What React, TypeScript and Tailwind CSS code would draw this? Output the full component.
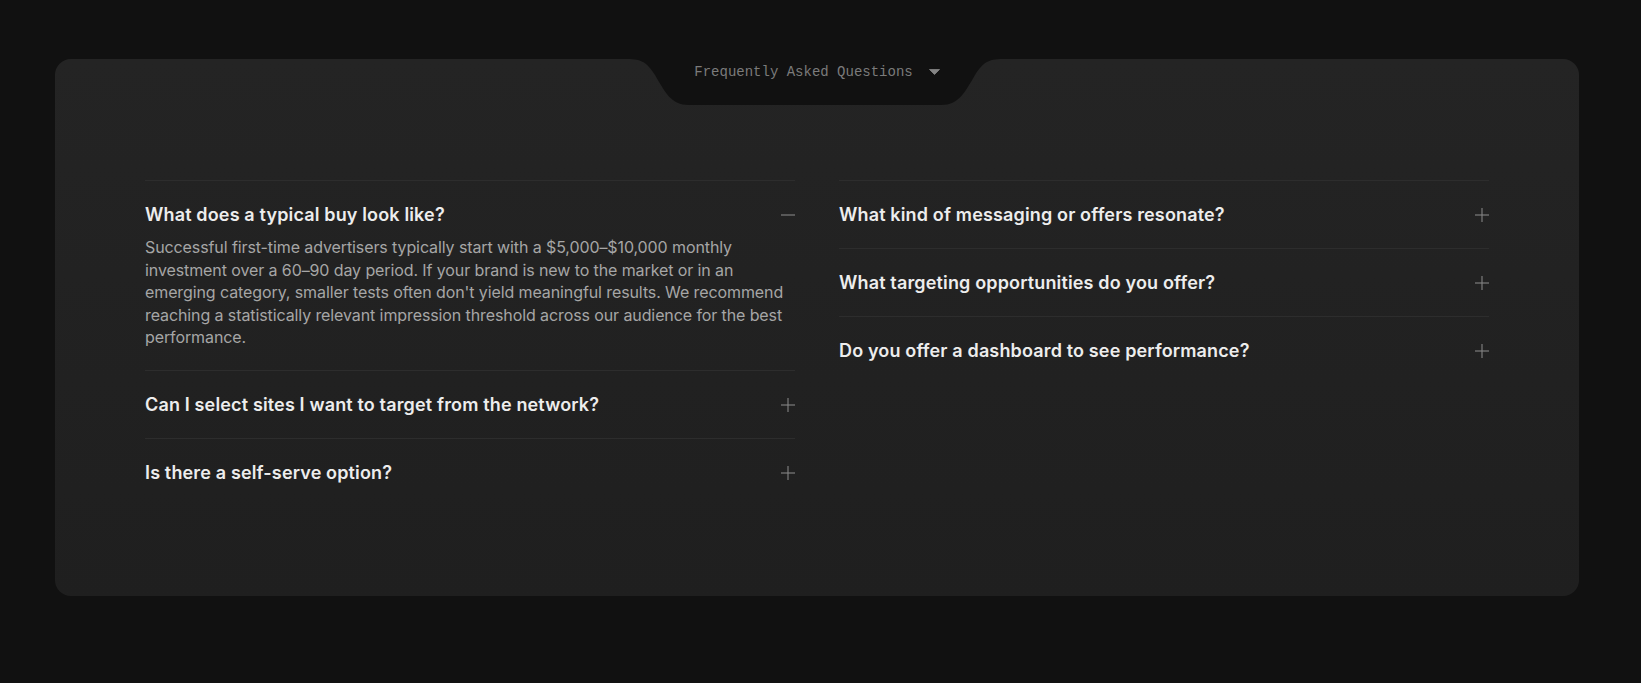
import { useState } from 'react';

type Faq = { id: string; q: string; a: string };

const left: Faq[] = [
  {
    id: 'buy',
    q: 'What does a typical buy look like?',
    a: "Successful first-time advertisers typically start with a $5,000–$10,000 monthly investment over a 60–90 day period. If your brand is new to the market or in an emerging category, smaller tests often don't yield meaningful results. We recommend reaching a statistically relevant impression threshold across our audience for the best performance.",
  },
  { id: 'sites', q: 'Can I select sites I want to target from the network?', a: '' },
  { id: 'self', q: 'Is there a self-serve option?', a: '' },
];

const right: Faq[] = [
  { id: 'msg', q: 'What kind of messaging or offers resonate?', a: '' },
  { id: 'target', q: 'What targeting opportunities do you offer?', a: '' },
  { id: 'dash', q: 'Do you offer a dashboard to see performance?', a: '' },
];

function PlusMinus({ open }: { open: boolean }) {
  return (
    <svg width="14" height="14" viewBox="0 0 14 14" className="shrink-0">
      <path d="M0 7H14" stroke="#858585" strokeWidth="1.1" />
      {!open && <path d="M7 0V14" stroke="#858585" strokeWidth="1.1" />}
    </svg>
  );
}

function Item({ item, open, onToggle }: { item: Faq; open: boolean; onToggle: () => void }) {
  return (
    <div className="border-t border-[#2d2d2d] pt-5 pb-[19px]">
      <button onClick={onToggle} className="w-full flex items-center justify-between text-left cursor-pointer">
        <span className="text-[18px] leading-7 font-semibold text-[#ededed] tracking-[0.15px]">{item.q}</span>
        <PlusMinus open={open} />
      </button>
      {open && (
        <p className="mt-[7px] mb-[2px] text-[16px] leading-[22.5px] tracking-[-0.1px] text-[#a6a6a6]">{item.a}</p>
      )}
    </div>
  );
}

export default function App() {
  const [openId, setOpenId] = useState<string | null>('buy');
  const toggle = (id: string) => setOpenId(openId === id ? null : id);

  return (
    <div className="min-h-[683px] bg-[#111111] pt-[59px] pl-[55px]" style={{ fontFamily: 'Inter, "Noto Sans", sans-serif' }}>
      <div className="relative w-[1524px] rounded-2xl bg-gradient-to-b from-[#242424] to-[#1f1f1f] px-[90px] pt-[121px] pb-[90px]">
        {/* notch tab */}
        <div className="absolute top-0 left-[572px] w-[376px] h-[46px]">
          <svg width="376" height="46" viewBox="0 0 376 46" className="absolute inset-0">
            <path
              d="M0 0 C16 0 20 4 28 16 C38 33 44 46 62 46 L314 46 C332 46 338 33 348 16 C356 4 360 0 376 0 Z"
              fill="#111111"
            />
          </svg>
          <div className="relative flex items-center justify-center gap-[16px] pt-[3px] pl-[4px]">
            <span className="text-[14px] leading-5 text-[#7b7b7b]" style={{ fontFamily: '"Liberation Mono", "Courier New", monospace' }}>
              Frequently Asked Questions
            </span>
            <svg width="11" height="6" viewBox="0 0 11 6">
              <path d="M0.5 0.5H10.5L5.5 5.5Z" fill="#858585" stroke="#858585" strokeLinejoin="round" strokeWidth="0.8" />
            </svg>
          </div>
        </div>

        <div className="grid grid-cols-2 gap-x-[44px] items-start">
          <div>
            {left.map((f) => (
              <Item key={f.id} item={f} open={openId === f.id} onToggle={() => toggle(f.id)} />
            ))}
          </div>
          <div>
            {right.map((f) => (
              <Item key={f.id} item={f} open={openId === f.id} onToggle={() => toggle(f.id)} />
            ))}
          </div>
        </div>
      </div>
    </div>
  );
}
